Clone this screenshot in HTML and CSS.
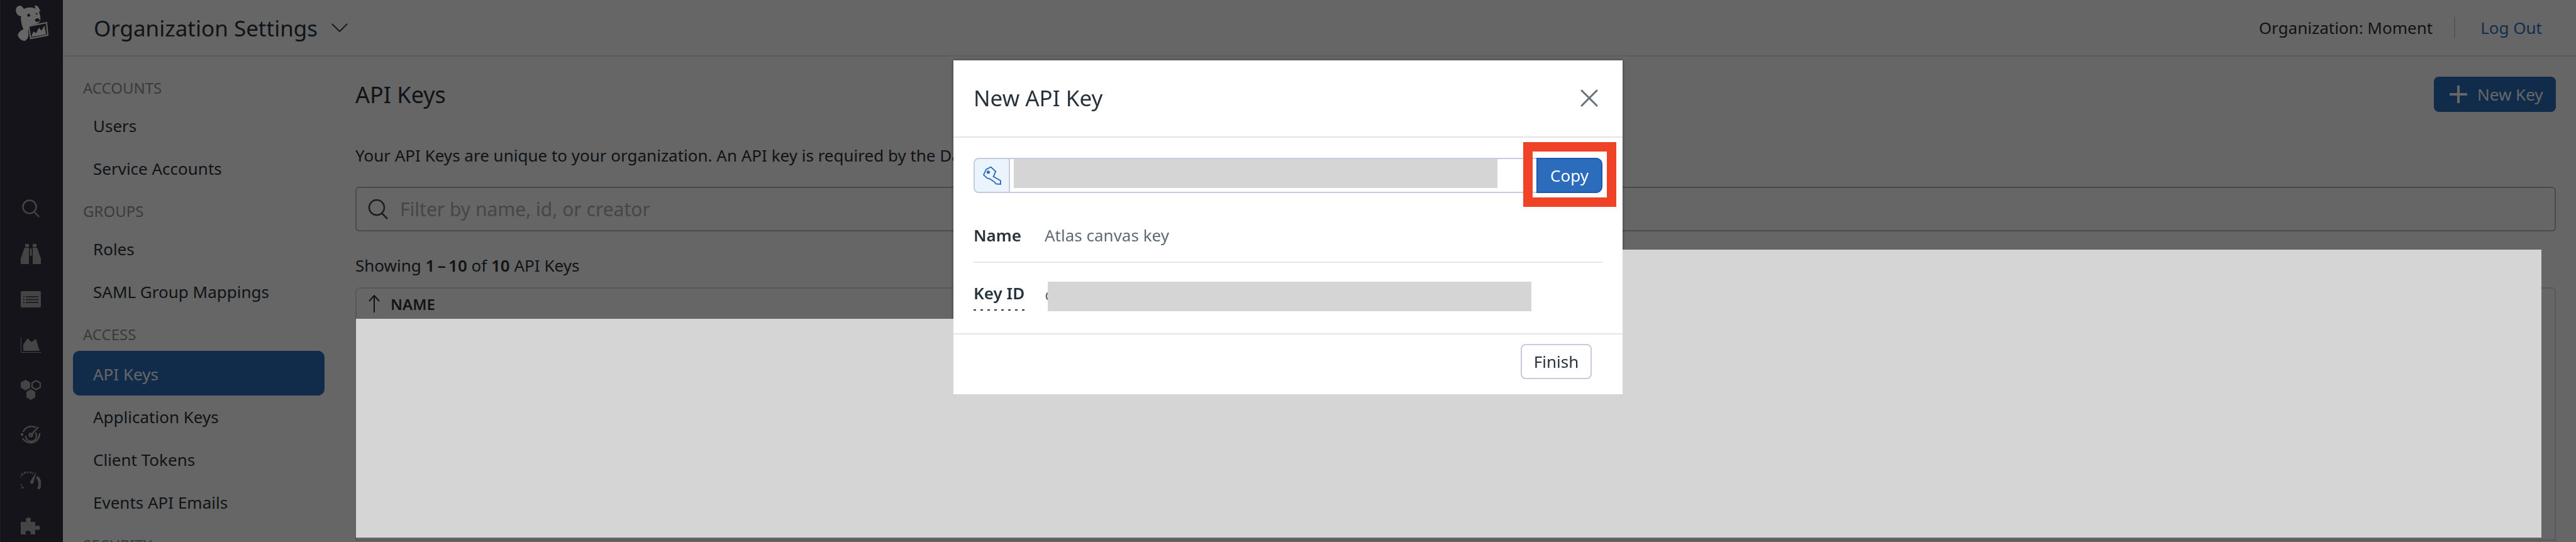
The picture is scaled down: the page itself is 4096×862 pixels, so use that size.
FILE: index.html
```html
<!DOCTYPE html>
<html lang="en">
<head>
    <meta charset="UTF-8">
    <title>Organization Settings - API Keys</title>
    <link rel="stylesheet" href="styles.css">
</head>
<body>
    <div class="app">
        <nav class="rail">
            <div class="rail-logo">
                <svg width="100" height="90" viewBox="0 0 300 270">
                    <ellipse cx="96" cy="52" rx="20" ry="25" fill="#fff" transform="rotate(-15 96 52)"/>
                    <path d="M112 45C130 33 152 33 170 42L165 30C172 20 184 30 192 52L186 56C196 82 196 104 180 112L138 124L134 152C140 170 132 190 118 195C104 196 88 182 85 168C88 152 100 144 112 140C100 110 92 80 112 45Z" fill="#fff"/>
                    <circle cx="137" cy="73" r="7" fill="#343241"/>
                    <circle cx="175" cy="66" r="4" fill="#343241"/>
                    <ellipse cx="178" cy="96" rx="11" ry="8" fill="#343241"/>
                    <path d="M137 125L222 108L228 168L146 184Z" fill="#343241" stroke="#fff" stroke-width="6"/>
                    <path d="M148 176L160 150L172 158L186 132L198 146L212 122L220 164Z" fill="#fff"/>
                </svg>
            </div>
            <div class="rail-nav">
                <div class="rail-item">
                    <svg width="30" height="30" viewBox="0 0 30 30" fill="none" stroke="currentColor" stroke-width="2.5"><circle cx="13" cy="12" r="10.5"/><path d="M20.5 20L28 28"/></svg>
                </div>
                <div class="rail-item">
                    <svg width="32" height="32" viewBox="0 0 32 32" fill="currentColor"><path d="M7 0h6v5H7zM19 0h6v5h-6zM6 6h7v26H0v-9zM26 6h-7v26h13v-9zM14.5 7h3v12h-3z"/></svg>
                </div>
                <div class="rail-item">
                    <svg width="32" height="26" viewBox="0 0 32 26"><rect width="32" height="26" rx="2" fill="currentColor"/><path d="M8 9h20M8 13.5h20M8 18h20M4 9h2M4 13.5h2M4 18h2" stroke="#343241" stroke-width="1.4"/></svg>
                </div>
                <div class="rail-item">
                    <svg width="32" height="25" viewBox="0 0 32 25" fill="currentColor"><path d="M0 0h1v24h32v1H0z"/><path d="M4 22V12L11 2L17 8L24 3L30 22z"/></svg>
                </div>
                <div class="rail-item">
                    <svg width="32" height="32" viewBox="0 0 32 32" fill="currentColor"><path d="M7.500 0L15 4.300V12.700L7.500 17L0 12.700V4.300z"/><path d="M24.500 1.500L31 5V12L24.500 15.500L18 12V5z" fill="none" stroke="currentColor" stroke-width="2.200"/><path d="M16 15L23 19V28L16 32L9 28V19z"/></svg>
                </div>
                <div class="rail-item">
                    <svg width="32" height="32" viewBox="0 0 32 32" fill="none" stroke="currentColor" stroke-width="2.400"><path d="M4 11A14 14 0 0 1 24 4"/><path d="M30 13A14.500 14.500 0 0 1 3 21"/><path d="M8 17A8.500 8.500 0 1 0 23 12"/><circle cx="16" cy="16" r="2.500"/><path d="M16 16L28 3"/><circle cx="2" cy="15" r="1" fill="currentColor"/></svg>
                </div>
                <div class="rail-item">
                    <svg width="32" height="28" viewBox="0 0 32 28" fill="none" stroke="currentColor"><path d="M4 26A14 14 0 0 1 20 3" stroke-width="3.500" stroke-dasharray="2.500 2.200"/><path d="M27 10C31 15 31 21 29 26" stroke-width="4.500" stroke-linecap="round"/><path d="M25 0L20 18C18 21 14 19 15 16z" fill="currentColor" stroke="none"/></svg>
                </div>
                <div class="rail-item">
                    <svg width="32" height="28" viewBox="0 0 32 28" fill="currentColor"><path d="M0 8H7C10 8 8 6 8 4C8 0 16 0 16 4C16 6 14 8 17 8H23V13C23 16 25 14 27 14C32 14 32 21 27 21C25 21 23 19 23 22V28H14C17 28 17 22 11 22C6 22 7 28 10 28H0z"/></svg>
                </div>
            </div>
        </nav>

        <div class="page">
            <header class="topbar">
                <div class="topbar-title">
                    <span>Organization Settings</span>
                    <svg width="26" height="14" viewBox="0 0 26 14" fill="none" stroke="#3a4048" stroke-width="2"><path d="M1 1L13 13L25 1"/></svg>
                </div>
                <div class="topbar-right">
                    <span class="org-name">Organization: Moment</span>
                    <a class="logout">Log Out</a>
                </div>
            </header>

            <div class="columns">
                <aside class="sidebar">
                    <div class="side-label">ACCOUNTS</div>
                    <a class="side-item">Users</a>
                    <a class="side-item">Service Accounts</a>
                    <div class="side-label">GROUPS</div>
                    <a class="side-item">Roles</a>
                    <a class="side-item">SAML Group Mappings</a>
                    <div class="side-label">ACCESS</div>
                    <a class="side-item active">API Keys</a>
                    <a class="side-item">Application Keys</a>
                    <a class="side-item">Client Tokens</a>
                    <a class="side-item">Events API Emails</a>
                    <div class="side-label">SECURITY</div>
                </aside>

                <main class="content">
                    <div class="content-head">
                        <h1>API Keys</h1>
                        <button class="new-key">
                            <svg width="28" height="28" viewBox="0 0 28 28" fill="currentColor"><path d="M12 0h4v12h12v4H16v12h-4V16H0v-4h12z"/></svg>
                            New Key
                        </button>
                    </div>
                    <p class="intro">Your API Keys are unique to your organization. An API key is required by the Datadog Agent to submit metrics and events to Datadog.</p>
                    <div class="search">
                        <svg width="34" height="32" viewBox="0 0 34 32" fill="none" stroke="#3f454b" stroke-width="2.500"><circle cx="15" cy="13" r="12"/><path d="M23 22L32 31"/></svg>
                        <span>Filter by name, id, or creator</span>
                    </div>
                    <div class="count">Showing <b>1&#8201;–&#8201;10</b> of <b>10</b> API Keys</div>
                    <div class="table">
                        <div class="table-head">
                            <svg width="18" height="28" viewBox="0 0 18 28" fill="none" stroke="#2a3036" stroke-width="2"><path d="M9 28V1M1 10L9 1L17 10"/></svg>
                            <span>NAME</span>
                        </div>
                    </div>
                </main>
            </div>
        </div>
    </div>

    <div class="overlay">
        <section class="modal">
            <div class="modal-head">
                <h2>New API Key</h2>
                <svg width="28" height="28" viewBox="0 0 28 28" fill="none" stroke="#687078" stroke-width="3" stroke-linecap="round"><path d="M2 2L26 26M26 2L2 26"/></svg>
            </div>
            <div class="modal-body">
                <div class="key-field">
                    <div class="key-icon">
                        <svg width="31" height="31" viewBox="186 126 92 92" fill="none" stroke="#2c6cbc" stroke-width="5.500"><path d="M192 168L204 142L226 131L249 152L238 176L272 195V212L250 210L244 202L234 195L222 187L208 183Z"/><circle cx="214" cy="155" r="5" fill="#2c6cbc"/></svg>
                    </div>
                    <div class="key-value"><div class="redact-key"></div></div>
                    <button class="copy">Copy</button>
                </div>
                <div class="row row-name">
                    <span class="row-label">Name</span>
                    <span class="row-value">Atlas canvas key</span>
                </div>
                <div class="row row-id">
                    <span class="row-label dotted">Key ID</span>
                    <span class="row-value clipped">c</span>
                    <div class="redact-id"></div>
                </div>
            </div>
            <div class="modal-foot">
                <button class="finish">Finish</button>
            </div>
            <div class="callout"></div>
        </section>

        <div class="redact redact-left"></div>
        <div class="redact redact-under"></div>
        <div class="redact redact-right"></div>
    </div>
</body>
</html>
```

FILE: styles.css
```css
html, body {
    margin: 0;
    height: 862px;
    overflow: hidden;
}

body {
    font-family: "Noto Sans", sans-serif;
    font-size: 26px;
    color: #28323a;
    background: #fff;
}

.app {
    display: flex;
    height: 862px;
}

/* left rail */
.rail {
    width: 99px;
    flex-shrink: 0;
    background: #343241;
    border-left: 1px solid #4c4a5c;
    color: #aaa;
}

.rail-logo {
    height: 88px;
    margin-left: -1px;
}

.rail-nav {
    padding-top: 208px;
}

.rail-item {
    height: 72px;
    display: flex;
    align-items: center;
    justify-content: center;
    margin-left: -3px;
}

.page {
    flex: 1;
    min-width: 0;
}

/* top bar */
.topbar {
    height: 88px;
    border-bottom: 2px solid #e2e5e9;
    display: flex;
    align-items: center;
    justify-content: space-between;
    padding: 0 54px 0 49px;
}

.topbar-title {
    display: flex;
    align-items: center;
    gap: 22px;
    font-size: 35px;
}

.topbar-right {
    display: flex;
    align-items: center;
}

.org-name {
    padding-right: 34px;
    border-right: 2px solid #d2d6da;
    line-height: 34px;
}

.logout {
    margin-left: 40px;
    color: #2f72c4;
}

.columns {
    display: flex;
}

/* settings menu */
.sidebar {
    width: 400px;
    flex-shrink: 0;
    padding: 33px 48px 0 16px;
}

.side-label {
    height: 34px;
    line-height: 34px;
    margin: 17px 0 9px 16px;
    font-size: 24px;
    color: #8f949b;
}

.side-label:first-child {
    margin-top: 0;
}

.side-item {
    display: block;
    height: 68px;
    line-height: 68px;
    padding-left: 32px;
}

.side-item.active {
    height: 71px;
    line-height: 74px;
    background: #2c6cbc;
    color: #fff;
    border-radius: 10px;
}

/* main column */
.content {
    flex: 1;
    min-width: 0;
    padding: 32px 32px 0 1px;
}

.content-head {
    display: flex;
    align-items: center;
    justify-content: space-between;
    height: 56px;
}

h1 {
    margin: 0;
    font-size: 36px;
    font-weight: 400;
}

.new-key {
    display: flex;
    align-items: center;
    gap: 16px;
    width: 194px;
    height: 56px;
    padding: 0 0 0 25px;
    background: #2c6cbc;
    border: 0;
    border-radius: 8px;
    font: inherit;
    color: #fff;
}

.intro {
    margin: 51px 0 32px;
    line-height: 36px;
    white-space: nowrap;
}

.search {
    display: flex;
    align-items: center;
    gap: 18px;
    height: 67px;
    padding-left: 17px;
    border: 2px solid #b4bac6;
    border-radius: 6px;
    font-size: 30px;
    color: #aab0b8;
}

.count {
    margin-top: 36px;
    line-height: 36px;
}

.count b {
    font-weight: 600;
}

.table {
    margin-top: 17px;
    height: 399px;
    border: 2px solid #d8dce1;
    border-radius: 6px 6px 0 0;
}

.table-head {
    display: flex;
    align-items: center;
    gap: 17px;
    height: 48px;
    padding-left: 19px;
    font-size: 24px;
    font-weight: 600;
}

/* dim layer and dialog */
.overlay {
    position: fixed;
    inset: 0;
    display: flex;
    justify-content: center;
    align-items: flex-start;
    padding-top: 96px;
    background: rgba(0, 0, 0, 0.6);
}

/* blanked out table rows */
.redact {
    position: absolute;
    background: #d5d5d5;
}

.redact-left {
    left: 566px;
    top: 507px;
    width: 950px;
    height: 348px;
}

.redact-under {
    left: 1516px;
    top: 627px;
    width: 1064px;
    height: 228px;
}

.redact-right {
    left: 2580px;
    top: 397px;
    width: 1461px;
    height: 458px;
}

.modal {
    position: relative;
    width: 1064px;
    height: 531px;
    background: #fff;
    box-shadow: 0 0 5px rgba(0, 0, 0, 0.4);
}

.modal-head {
    display: flex;
    align-items: center;
    justify-content: space-between;
    height: 123px;
    padding: 0 39px 2px 32px;
    box-sizing: border-box;
    border-bottom: 2px solid #e2e5e9;
}

h2 {
    margin: 0;
    font-size: 35px;
    font-weight: 400;
}

.modal-body {
    height: 311px;
    padding: 32px 32px 0;
    box-sizing: border-box;
}

.key-field {
    display: flex;
    height: 56px;
}

.key-icon {
    display: flex;
    align-items: center;
    justify-content: center;
    width: 58px;
    box-sizing: border-box;
    background: #ebf4fd;
    border: 2px solid #c6cbde;
    border-radius: 8px 0 0 8px;
}

.key-value {
    flex: 1;
    padding-left: 6px;
    border: solid #c6cbde;
    border-width: 2px 0;
}

.redact-key {
    width: 769px;
    height: 46px;
    background: #d5d5d5;
}

.copy {
    width: 105px;
    background: #2c6cbc;
    border: 2px solid #1e56b3;
    border-radius: 0 10px 10px 0;
    font: inherit;
    color: #fff;
}

.row {
    display: flex;
}

.row-name {
    align-items: center;
    height: 84px;
    padding-bottom: 3px;
    box-sizing: border-box;
    margin-top: 27px;
    border-bottom: 2px solid #e2e5e9;
}

.row-id {
    align-items: flex-start;
    padding-top: 30px;
}

.row-label {
    width: 113px;
    flex-shrink: 0;
    line-height: 36px;
    font-weight: 600;
}

.row-label.dotted {
    width: auto;
    margin: 0 32px 0 0;
    padding-bottom: 10px;
    line-height: 36px;
    background: repeating-linear-gradient(90deg, #28323a 0 4px, transparent 4px 11px) left bottom / 100% 2px no-repeat;
}

.row-value {
    color: #5f6a73;
}

.clipped {
    width: 5px;
    margin-top: 2px;
    overflow: hidden;
}

.redact-id {
    width: 769px;
    height: 47px;
    background: #d5d5d5;
}

.modal-foot {
    display: flex;
    justify-content: flex-end;
    height: 97px;
    padding: 15px 49px 0 0;
    box-sizing: border-box;
    border-top: 2px solid #e2e5e9;
}

.finish {
    width: 113px;
    height: 56px;
    background: #fff;
    border: 2px solid #c6cbde;
    border-radius: 8px;
    font: inherit;
    color: #28323a;
}

/* red annotation round the copy button */
.callout {
    position: absolute;
    left: 906px;
    top: 130px;
    width: 148px;
    height: 103px;
    box-sizing: border-box;
    border: 15px solid #ef4226;
}
```
